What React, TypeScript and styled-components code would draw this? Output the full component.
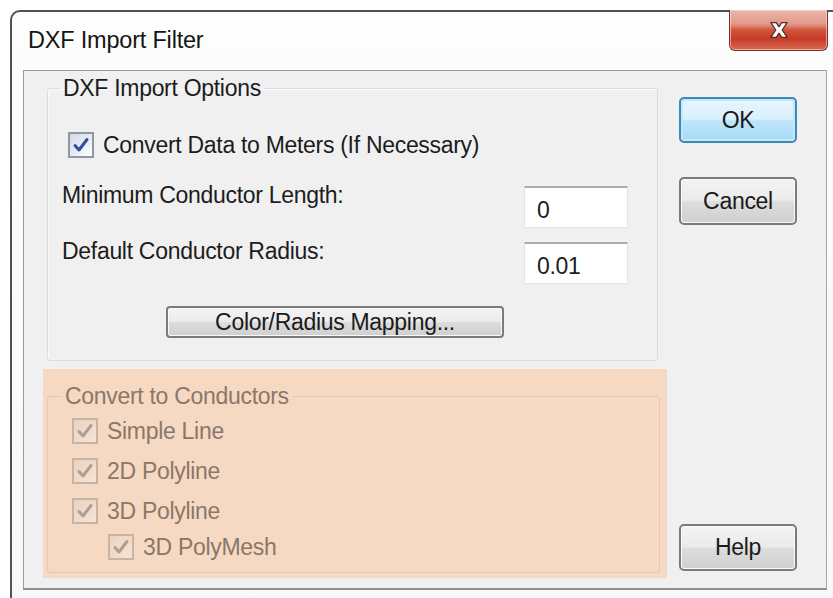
import React from 'react';
import styled, { createGlobalStyle } from 'styled-components';

const GlobalStyle = createGlobalStyle`
  html, body {
    margin: 0;
    padding: 0;
    background: #ffffff;
    overflow: hidden;
  }
  body {
    font-family: 'Liberation Sans', Arial, sans-serif;
  }
`;

const Window = styled.div`
  box-sizing: border-box;
  margin: 10px 0 0 10px;
  width: 832px;
  height: 600px;
  border: 2px solid #4f5256;
  border-top-left-radius: 10px;
  border-bottom-left-radius: 8px;
  background: linear-gradient(180deg, #fdfdfd 0%, #f7f8f9 100%);
  display: flex;
  flex-direction: column;
`;

const TitleBar = styled.div`
  display: flex;
  align-items: flex-start;
  height: 58px;
  padding: 0 0 0 16px;
`;

const Title = styled.div`
  flex: 1;
  font-size: 23.5px;
  color: #151515;
  padding-top: 15px;
  letter-spacing: -0.2px;
`;

const CloseButton = styled.button`
  width: 99px;
  height: 41px;
  margin: -2px 12px 0 0;
  padding: 0;
  border: 1px solid #7a332a;
  border-top: none;
  border-radius: 0 0 6px 6px;
  background: linear-gradient(
    180deg,
    #eab6a8 0%,
    #e3998a 35%,
    #d2543c 50%,
    #c73c27 72%,
    #d96a55 100%
  );
  box-shadow: inset 0 0 0 1px rgba(255, 220, 210, 0.6);
  display: flex;
  align-items: center;
  justify-content: center;
`;

const Client = styled.div`
  display: flex;
  margin: 0 0 0 11px;
  border: 1px solid #9a9a9a;
  border-bottom: 2px solid #8e8e8e;
  border-right: 1px solid #a8a8a8;
  background: #f0f0f0;
  width: 804px;
  box-sizing: border-box;
`;

const LeftColumn = styled.div`
  width: 624px;
  padding: 5px 0 10px 19px;
  display: flex;
  flex-direction: column;
`;

const RightColumn = styled.div`
  flex: 1;
  display: flex;
  flex-direction: column;
  align-items: flex-start;
  padding: 26px 0 17px 12px;
`;

const GroupBox = styled.fieldset<{ $bare?: boolean }>`
  margin: 0;
  min-width: 0;
  border: 1px solid ${(p) => (p.$bare ? 'rgba(200, 175, 155, 0.4)' : '#d9dde0')};
  box-shadow: ${(p) => (p.$bare ? 'none' : 'inset 1px 1px 0 #fbfbfb')};
  border-radius: 3px;
`;

const Legend = styled.legend<{ $muted?: boolean; $offset: number }>`
  margin-left: ${(p) => p.$offset}px;
  padding: 0 3px;
  font-size: 23px;
  line-height: 24px;
  letter-spacing: -0.3px;
  color: ${(p) => (p.$muted ? '#8c7767' : '#1c1c1c')};
`;

const OptionsGroup = styled(GroupBox)`
  margin: 0 9px 0 4px;
  padding: 32px 29px 22px 14px;
`;

const CheckRow = styled.label<{ $indent?: number; $muted?: boolean }>`
  display: flex;
  align-items: center;
  gap: 9px;
  height: 26px;
  padding-left: ${(p) => p.$indent ?? 0}px;
  font-size: 23px;
  letter-spacing: -0.3px;
  color: ${(p) => (p.$muted ? '#8c7767' : '#1c1c1c')};
`;

const Box = styled.span<{ $muted?: boolean }>`
  box-sizing: border-box;
  width: 26px;
  height: 26px;
  flex: none;
  display: flex;
  align-items: center;
  justify-content: center;
  border: 2px solid ${(p) => (p.$muted ? '#cbb3a2' : '#8f97a3')};
  background: ${(p) =>
    p.$muted
      ? 'linear-gradient(135deg, #ead2bf 0%, #f6e4d6 100%)'
      : 'linear-gradient(135deg, #d3d9e4 0%, #eef1f6 65%, #ffffff 100%)'};
`;

const FieldRow = styled.div<{ $gap: number }>`
  display: grid;
  grid-template-columns: 1fr 104px;
  align-items: start;
  margin-top: ${(p) => p.$gap}px;
`;

const FieldLabel = styled.span`
  font-size: 23px;
  line-height: 24px;
  letter-spacing: -0.3px;
  color: #1c1c1c;
  margin-top: -3px;
`;

const TextInput = styled.input`
  box-sizing: border-box;
  width: 104px;
  height: 42px;
  margin: 0;
  padding: 6px 0 0 12px;
  border: 1px solid #e2e3e5;
  border-top: 2px solid #abadb3;
  background: #ffffff;
  font-family: 'Liberation Sans', Arial, sans-serif;
  font-size: 23px;
  letter-spacing: -0.3px;
  color: #1c1c1c;
  outline: none;
`;

const PushButton = styled.button<{ $default?: boolean; $width?: number; $height?: number }>`
  box-sizing: border-box;
  width: ${(p) => p.$width ?? 118}px;
  height: ${(p) => p.$height ?? 47}px;
  padding: 0;
  border-radius: 5px;
  font-family: 'Liberation Sans', Arial, sans-serif;
  font-size: 23px;
  letter-spacing: -0.3px;
  color: #1a1a1a;
  border: 2px solid ${(p) => (p.$default ? '#3d8bb5' : '#7b7b7b')};
  background: ${(p) =>
    p.$default
      ? 'linear-gradient(180deg, #eaf6fd 0%, #d9f0fc 48%, #bee6fd 52%, #a7d9f5 100%)'
      : 'linear-gradient(180deg, #f3f3f3 0%, #ebebeb 48%, #dddddd 52%, #cfcfcf 100%)'};
  box-shadow: ${(p) =>
    p.$default ? 'inset 0 0 0 2px #c4e8fb' : 'inset 0 0 0 1px #fafafa'};
`;

const MappingButton = styled(PushButton)`
  margin: 22px 0 0 104px;
  border-radius: 4px;
`;

const ConductorPanel = styled.div`
  margin-top: 8px;
  height: 209px;
  background: #f5d9c3;
  padding: 0 7px 0 4px;
  box-sizing: border-box;
`;

const ConductorGroup = styled(GroupBox)`
  margin: 0;
  margin-top: 15px;
  padding: 10px 0 12px 24px;
  height: 189px;
  box-sizing: border-box;
  display: flex;
  flex-direction: column;
`;

const Stack = styled.div<{ $gap: number }>`
  margin-top: ${(p) => p.$gap}px;
`;

const Spacer = styled.div`
  flex: 1;
`;

const Check: React.FC<{ muted?: boolean }> = ({ muted }) => (
  <Box $muted={muted}>
    <svg width="18" height="18" viewBox="0 0 18 18">
      <path
        d="M3 9.5 L7 14 L15 3.5"
        fill="none"
        stroke={muted ? '#b29d8e' : '#33509e'}
        strokeWidth="3"
        strokeLinecap="round"
        strokeLinejoin="round"
      />
    </svg>
  </Box>
);

const conductorTypes = [
  { label: 'Simple Line', indent: 0, gap: 0 },
  { label: '2D Polyline', indent: 0, gap: 14 },
  { label: '3D Polyline', indent: 0, gap: 14 },
  { label: '3D PolyMesh', indent: 36, gap: 10 },
];

const App: React.FC = function () {
  return (
    <>
      <GlobalStyle />
      <Window>
        <TitleBar>
          <Title>DXF Import Filter</Title>
          <CloseButton aria-label="Close">
            <svg width="24" height="20" viewBox="0 0 26 22">
              <path
                d="M4 3 H10 L13 7.5 L16 3 H22 L16.5 11 L22 19 H16 L13 14.5 L10 19 H4 L9.5 11 Z"
                fill="#ffffff"
                stroke="#5a2a24"
                strokeWidth="1.4"
                strokeLinejoin="round"
              />
            </svg>
          </CloseButton>
        </TitleBar>
        <Client>
          <LeftColumn>
            <OptionsGroup>
              <Legend $offset={-2}>DXF Import Options</Legend>
              <CheckRow $indent={6}>
                <Check />
                Convert Data to Meters (If Necessary)
              </CheckRow>
              <FieldRow $gap={28}>
                <FieldLabel>Minimum Conductor Length:</FieldLabel>
                <TextInput defaultValue="0" />
              </FieldRow>
              <FieldRow $gap={14}>
                <FieldLabel>Default Conductor Radius:</FieldLabel>
                <TextInput defaultValue="0.01" />
              </FieldRow>
              <MappingButton $width={338} $height={32}>
                Color/Radius Mapping...
              </MappingButton>
            </OptionsGroup>
            <ConductorPanel>
              <ConductorGroup $bare>
                <Legend $muted $offset={-10}>
                  Convert to Conductors
                </Legend>
                {conductorTypes.map((t) => (
                  <Stack key={t.label} $gap={t.gap}>
                    <CheckRow $indent={t.indent} $muted>
                      <Check muted />
                      {t.label}
                    </CheckRow>
                  </Stack>
                ))}
              </ConductorGroup>
            </ConductorPanel>
          </LeftColumn>
          <RightColumn>
            <PushButton $default $height={46}>
              OK
            </PushButton>
            <Stack $gap={34}>
              <PushButton $height={48}>Cancel</PushButton>
            </Stack>
            <Spacer />
            <PushButton $height={47}>Help</PushButton>
          </RightColumn>
        </Client>
      </Window>
    </>
  );
};

export default App;
